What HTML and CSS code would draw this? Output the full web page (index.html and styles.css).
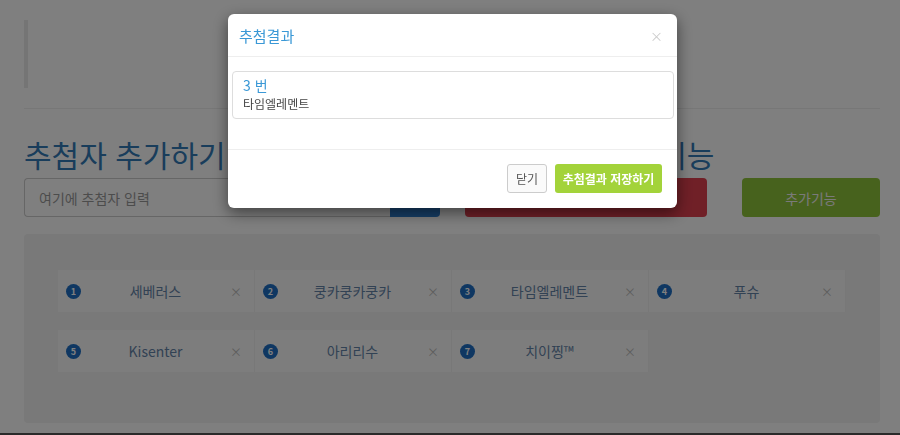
FILE: index.html
```html
<!DOCTYPE html>
<html lang="ko">
<head>
    <meta charset="UTF-8">
    <meta name="viewport" content="width=device-width, initial-scale=1.0">
    <title>추첨기</title>
    <link rel="stylesheet" href="styles.css">
</head>
<body>
    <div class="container">
        <div class="intro"></div>
        <hr class="divider">

        <div class="controls">
            <div class="col-add">
                <h1 class="title">추첨자 추가하기</h1>
                <div class="input-group">
                    <input type="text" class="name-input" placeholder="여기에 추첨자 입력">
                    <button class="btn btn-blue" aria-label="추가"></button>
                </div>
            </div>
            <div class="col-draw">
                <h1 class="title">추첨하기 / 추가기능</h1>
                <button class="btn btn-red" aria-label="추첨하기"></button>
            </div>
            <div class="col-extra">
                <button class="btn btn-green">추가기능</button>
            </div>
        </div>

        <div class="well">
            <div class="people">
                <div class="person"><span class="num">1</span><span class="name">세베러스</span><span class="remove">×</span></div>
                <div class="person"><span class="num">2</span><span class="name">쿵카쿵카쿵카</span><span class="remove">×</span></div>
                <div class="person"><span class="num">3</span><span class="name">타임엘레멘트</span><span class="remove">×</span></div>
                <div class="person"><span class="num">4</span><span class="name">푸슈</span><span class="remove">×</span></div>
                <div class="person"><span class="num">5</span><span class="name">Kisenter</span><span class="remove">×</span></div>
                <div class="person"><span class="num">6</span><span class="name">아리리수</span><span class="remove">×</span></div>
                <div class="person"><span class="num">7</span><span class="name">치이찡™</span><span class="remove">×</span></div>
            </div>
        </div>
    </div>
    <div class="footer"></div>

    <div class="backdrop"></div>
    <div class="modal">
        <div class="modal-dialog">
            <div class="modal-header">
                <h4 class="modal-title">추첨결과</h4>
                <span class="close">×</span>
            </div>
            <div class="modal-body">
                <div class="result">
                    <div class="result-num">3 번</div>
                    <div class="result-name">타임엘레멘트</div>
                </div>
            </div>
            <div class="modal-footer">
                <button class="btn btn-default">닫기</button>
                <button class="btn btn-save">추첨결과 저장하기</button>
            </div>
        </div>
    </div>
</body>
</html>
```

FILE: styles.css
```css
/* Styling global */
body {
    font-family: "Noto Sans CJK KR", "Noto Sans", sans-serif;
    background-color: #fff;
    color: #333;
    margin: 0;
    padding: 0;
}

.container {
    padding: 20px 20px 0 24px;
}

.intro {
    height: 68px;
    border-left: 4px solid #eaeaea;
}

.divider {
    border: 0;
    border-top: 1px solid #eee;
    margin: 20px 0 0;
}

/* Controls row */
.controls {
    display: flex;
    align-items: flex-end;
    margin-top: 28px;
}

.col-add {
    width: 416px;
}

.col-draw {
    width: 242px;
    margin-left: 25px;
}

.col-draw .title {
    white-space: nowrap;
}

.col-extra {
    width: 138px;
    margin-left: 35px;
}

.title {
    font-size: 30px;
    font-weight: 400;
    color: #337ab7;
    line-height: 34px;
    margin: 0 0 7px;
}

.input-group {
    display: flex;
    height: 39px;
}

.name-input {
    flex: 1;
    border: 1px solid #ccc;
    border-right: none;
    border-radius: 4px 0 0 4px;
    padding: 0 14px;
    font-family: inherit;
    font-size: 14px;
    color: #555;
}

.name-input::placeholder {
    color: #999;
}

.btn {
    display: block;
    border: none;
    border-radius: 4px;
    font-family: inherit;
    cursor: pointer;
}

.input-group .btn-blue {
    width: 50px;
    border-radius: 0 4px 4px 0;
}

.btn-blue {
    background-color: #2d7ed0;
}

.btn-red {
    width: 100%;
    height: 39px;
    background-color: #e0404f;
}

.btn-green {
    width: 100%;
    height: 39px;
    background-color: #8fc43a;
    color: #f4f4f4;
    font-size: 14px;
}

/* Participant list */
.well {
    margin-top: 17px;
    background-color: #f3f3f3;
    border-radius: 4px;
    padding: 36px 34px 51px;
}

.people {
    display: grid;
    grid-template-columns: repeat(4, 1fr);
    row-gap: 18px;
}

.person {
    display: flex;
    align-items: center;
    height: 42px;
    background-color: #fbfbfb;
    border-right: 1px solid #f1f1f1;
    padding: 0 12px 0 8px;
}

.num {
    width: 15px;
    height: 15px;
    border-radius: 50%;
    background-color: #1e6fc4;
    color: #fff;
    font-size: 9px;
    font-weight: bold;
    line-height: 15px;
    text-align: center;
}

.name {
    flex: 1;
    text-align: center;
    font-size: 14px;
    color: #6584a8;
}

.remove {
    color: #bbb;
    font-size: 12px;
}

.footer {
    margin-top: 10px;
    height: 2px;
    background-color: #555;
}

/* Modal */
.backdrop {
    position: fixed;
    inset: 0;
    background-color: rgba(0, 0, 0, 0.5);
}

.modal {
    position: fixed;
    inset: 0;
    padding: 14px 0 0 228px;
}

.modal-dialog {
    width: 449px;
    background-color: #fff;
    border-radius: 6px;
    box-shadow: 0 5px 15px rgba(0, 0, 0, 0.5);
}

.modal-header {
    display: flex;
    justify-content: space-between;
    align-items: center;
    height: 42px;
    padding: 0 14px 0 11px;
    border-bottom: 1px solid #eee;
}

.modal-title {
    margin: 0;
    font-size: 15px;
    font-weight: 400;
    color: #3a98d6;
}

.close {
    color: #ccc;
    font-size: 13px;
}

.modal-body {
    padding: 14px 3px 30px 4px;
}

.result {
    border: 1px solid #ddd;
    border-radius: 4px;
    padding: 3px 10px 5px;
}

.result-num {
    font-size: 14px;
    line-height: 20px;
    color: #3a98d6;
}

.result-name {
    font-size: 12px;
    line-height: 18px;
    color: #444;
}

.modal-footer {
    display: flex;
    justify-content: flex-end;
    gap: 8px;
    padding: 14px 15px 15px;
    border-top: 1px solid #eee;
}

.modal-footer .btn {
    height: 29px;
    font-size: 12px;
    border-radius: 3px;
}

.btn-default {
    width: 40px;
    background-color: #fafafa;
    border: 1px solid #ccc;
    color: #555;
}

.btn-save {
    width: 107px;
    background-color: #a3d33a;
    color: #fff;
    font-weight: bold;
}
```
